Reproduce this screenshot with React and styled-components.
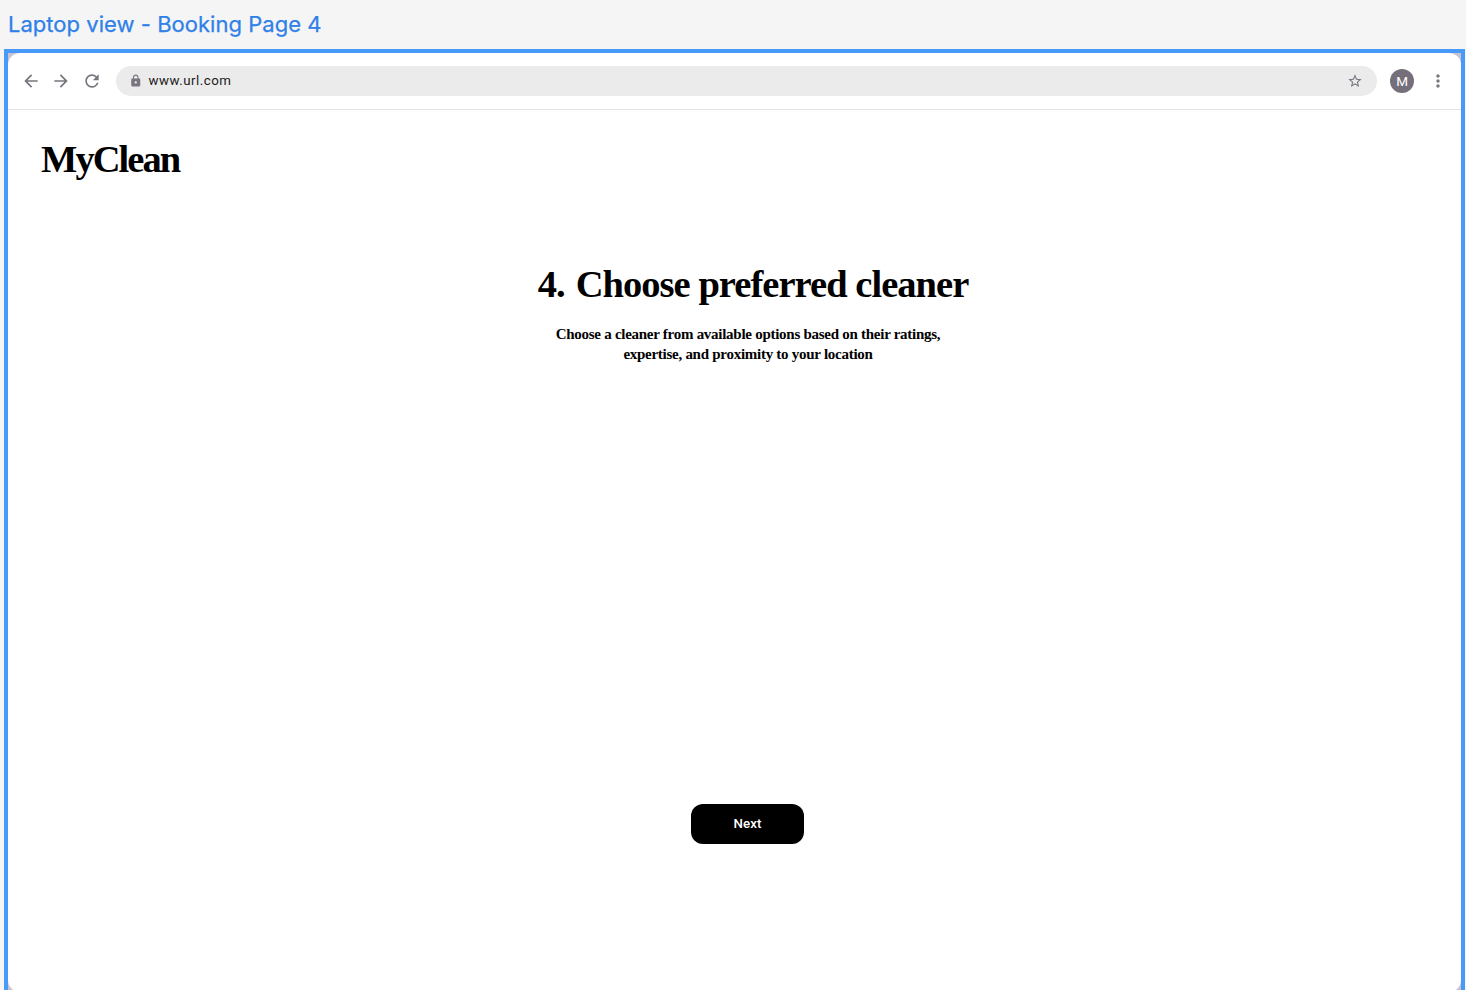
import React from "react";
import styled, { createGlobalStyle } from "styled-components";
import { MdArrowBack, MdArrowForward, MdRefresh, MdLock, MdStarBorder, MdMoreVert } from "react-icons/md";

const GlobalStyle = createGlobalStyle`
  *, *::before, *::after { box-sizing: border-box; }
  body { margin: 0; background: #f5f5f5; overflow: hidden; }
`;

const Canvas = styled.div`
  height: 990px;
  padding: 0 1px 0 4px;
  overflow: hidden;
  background: #f5f5f5;
`;

const FrameLabel = styled.div`
  height: 48.5px;
  padding: 10px 0 0 4px;
  font: 400 22px/28px Inter, sans-serif;
  letter-spacing: 0.03px;
  color: #2f80e8;
  -webkit-text-stroke: 0.25px #2f80e8;
  white-space: nowrap;
`;

const Frame = styled.div`
  height: 960px;
  padding: 4px;
  background: #4799fb;
`;

const Backdrop = styled.div`
  height: 952px;
  background: #c9c3cf;
`;

const Window = styled.div`
  height: 939.5px;
  display: flex;
  flex-direction: column;
  border-radius: 12px;
  background: #fff;
  overflow: hidden;
`;

const Toolbar = styled.header`
  height: 57.5px;
  flex: none;
  display: flex;
  align-items: center;
  padding: 0 13.5px 0 13.2px;
  border-bottom: 1px solid #e4e4e4;
  color: #79747e;
`;

const NavIcons = styled.nav`
  display: flex;
  gap: 10.3px;
  svg { display: block; }
`;

const AddressBar = styled.div`
  flex: 1;
  height: 30.5px;
  margin: 0 13px 0 13.8px;
  padding: 0 14px 0 13px;
  display: flex;
  align-items: center;
  border-radius: 16px;
  background: #ebebeb;
`;

const Url = styled.span`
  flex: 1;
  margin-left: 6.4px;
  font: 400 13.3px/20px Roboto, sans-serif;
  letter-spacing: 0.5px;
  color: #1d1b20;
`;

const Avatar = styled.div`
  width: 24px;
  height: 24px;
  margin-right: 13.3px;
  border-radius: 50%;
  background: #746f7a;
  color: #fff;
  font: 400 13.5px/25px Roboto, sans-serif;
  text-align: center;
`;

const Page = styled.main`
  flex: 1;
  display: flex;
  flex-direction: column;
  align-items: center;
  font-family: "Liberation Serif", serif;
  font-weight: 700;
  color: #000;
`;

const Brand = styled.div`
  align-self: flex-start;
  margin: 26px 0 0 33px;
  font-size: 38.5px;
  line-height: 46px;
  letter-spacing: -1.95px;
`;

const Title = styled.h1`
  display: flex;
  gap: 11px;
  margin: 79px 0 0 37px;
  font-size: 38.5px;
  line-height: 46px;
  letter-spacing: -0.95px;
  white-space: nowrap;
`;

const Description = styled.p`
  margin: 17px 0 0 27px;
  font-size: 15px;
  line-height: 20px;
  letter-spacing: -0.27px;
  text-align: center;
`;

const NextButton = styled.button`
  width: 113px;
  height: 40.5px;
  margin: auto 0 148px 26px;
  padding: 0;
  border: 0;
  border-radius: 12px;
  background: #000;
  color: #fff;
  font: 500 13.3px/20px Roboto, sans-serif;
  letter-spacing: 0.1px;
`;

export default function App() {
  return (
    <>
      <GlobalStyle />
      <Canvas>
        <FrameLabel>Laptop view - Booking Page 4</FrameLabel>
        <Frame>
          <Backdrop>
            <Window>
              <Toolbar>
                <NavIcons>
                  <MdArrowBack size={20} />
                  <MdArrowForward size={20} />
                  <MdRefresh size={20} />
                </NavIcons>
                <AddressBar>
                  <MdLock size={13.5} />
                  <Url>www.url.com</Url>
                  <MdStarBorder size={16} />
                </AddressBar>
                <Avatar>M</Avatar>
                <MdMoreVert size={20} />
              </Toolbar>
              <Page>
                <Brand>MyClean</Brand>
                <Title>
                  <span>4.</span>
                  <span>Choose preferred cleaner</span>
                </Title>
                <Description>
                  Choose a cleaner from available options based on their ratings,
                  <br />
                  expertise, and proximity to your location
                </Description>
                <NextButton>Next</NextButton>
              </Page>
            </Window>
          </Backdrop>
        </Frame>
      </Canvas>
    </>
  );
}
